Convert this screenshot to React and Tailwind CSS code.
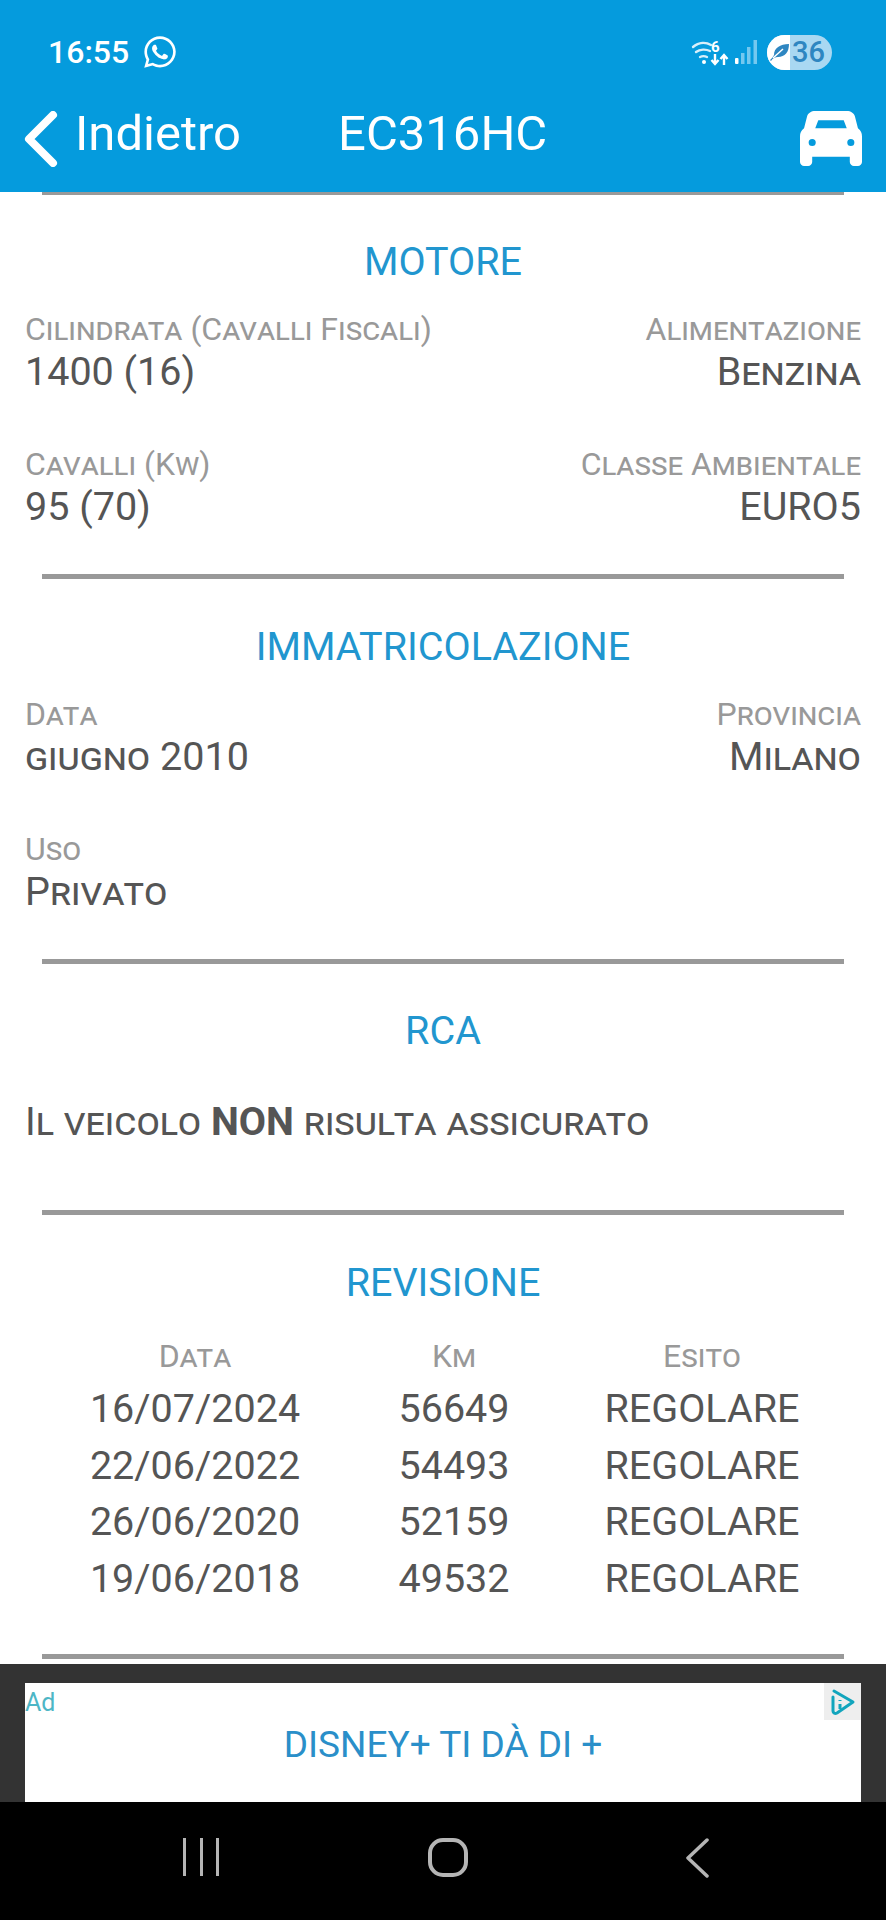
import React from 'react';
import { FaWhatsapp } from 'react-icons/fa';

const Divider = () => <div className="mx-[42px] h-[5px] bg-[#999999]" />;

const Heading = ({ children }) => (
  <h2 className="text-center text-[39.5px] leading-[42px] text-[#2196cf]">{children}</h2>
);

const Field = ({ label, value, right }) => (
  <div className={right ? 'text-right' : ''}>
    <div className="text-[32px] leading-[36px] text-[#999999] [font-variant:small-caps]">{label}</div>
    <div className="mt-[3px] text-[39.5px] leading-[44px] text-[#555555] [font-variant:small-caps]">{value}</div>
  </div>
);

const revisions = [
  ['16/07/2024', '56649'],
  ['22/06/2022', '54493'],
  ['26/06/2020', '52159'],
  ['19/06/2018', '49532'],
];

const StatusIcons = () => (
  <div className="flex items-center">
    {/* wifi + data arrows */}
    <svg width="36" height="28" viewBox="0 0 36 28" fill="none" className="overflow-visible">
      <g stroke="#d8effa" strokeWidth="2.4" strokeLinecap="round">
        <path d="M1 9c6-5 13-5 18-2" />
        <path d="M4 14c4-3 10-3 14-1" />
        <path d="M8 19c2-1 5-1 7 0" />
      </g>
      <circle cx="12" cy="24" r="2" fill="#ffffff" />
      <text x="19" y="14" fontSize="15" fontWeight="700" fill="#ffffff" fontFamily="Roboto, sans-serif">6</text>
      <path d="M23 16v10M19.500 22l3.500 4 3.500-4" stroke="#fff" strokeWidth="2.4" />
      <path d="M32 27V17M28.500 21l3.500-4 3.500 4" stroke="#fff" strokeWidth="2.4" />
    </svg>
    <svg className="ml-[7px]" width="22" height="24" viewBox="0 0 22 24">
      <rect x="0" y="18" width="3.500" height="6" rx="1" fill="#ffffff" />
      <rect x="6" y="13" width="3.500" height="11" fill="#74c8ef" />
      <rect x="12" y="7" width="3.500" height="17" fill="#74c8ef" />
      <rect x="18.500" y="0" width="3.500" height="24" fill="#74c8ef" />
    </svg>
    {/* battery */}
    <div className="ml-[10px] flex h-[35px] w-[65px] overflow-hidden rounded-full bg-[#a9d8f2]">
      <div className="flex w-[23px] items-center justify-end bg-white">
        <svg width="20" height="18" viewBox="0 0 20 18">
          <path d="M0 17C2 15 3 14 4 12C4 5 10 1 19 1C19 9 15 14 8 14C5 14 3 15 1 18Z" fill="#2e86c1" />
          <path d="M3 15L13 6" stroke="white" strokeWidth="1.500" />
        </svg>
      </div>
      <span className="pl-[2px] text-[29px] font-medium leading-[35px] text-[#2e86c1]">36</span>
    </div>
  </div>
);

const App = () => {
  return (
    <div className="flex h-[1920px] w-[886px] flex-col overflow-hidden bg-white font-['Roboto',sans-serif]">
      {/* Header */}
      <header className="h-[192px] shrink-0 bg-[#059bdd] text-white">
        <div className="flex items-center justify-between pl-[48px] pr-[54px] pt-[34px]">
          <div className="flex items-center gap-[13px]">
            <span className="text-[32px] font-medium leading-[34px]">16:55</span>
            <FaWhatsapp className="h-[36px] w-[36px]" />
          </div>
          <StatusIcons />
        </div>
        <div className="mt-[36px] flex items-center pl-[24px] pr-[24px]">
          <svg width="34" height="56" viewBox="0 0 34 56" fill="none">
            <path d="M29 4L5 28L29 52" stroke="white" strokeWidth="8" strokeLinecap="round" strokeLinejoin="round" />
          </svg>
          <span className="ml-[17px] pb-[9px] text-[49px] leading-[56px]">Indietro</span>
          <span className="ml-[97px] pb-[9px] text-[49px] leading-[56px]">EC316HC</span>
          {/* car */}
          <svg className="ml-auto" width="62" height="55" viewBox="0 0 61 54" fill="white" fillRule="evenodd">
            <path d="M15 0H46C50 0 53 2 54 5L57 17C60 19 61 22 61 25V50C61 52 59 54 57 54H53C51 54 49 52 49 50V45H12V50C12 52 10 54 8 54H4C2 54 0 52 0 50V25C0 22 1 19 4 17L7 5C8 2 11 0 15 0ZM18 9H43L46 17H15ZM8.500 31a3.500 3.500 0 1 0 7 0a3.500 3.500 0 1 0-7 0ZM46.500 31a3.500 3.500 0 1 0 7 0a3.500 3.500 0 1 0-7 0Z" />
          </svg>
        </div>
      </header>

      {/* Content */}
      <main className="flex-1 overflow-hidden">
        <div className="mx-[42px] h-[3px] bg-[#999999]" />

        <section className="px-[25px] pt-[46px]">
          <Heading>MOTORE</Heading>
          <div className="mt-[28px] flex justify-between">
            <Field label="Cilindrata (Cavalli Fiscali)" value="1400 (16)" />
            <Field right label="Alimentazione" value="Benzina" />
          </div>
          <div className="mt-[52px] flex justify-between pb-[45px]">
            <Field label="Cavalli (Kw)" value="95 (70)" />
            <Field right label="Classe Ambientale" value="EURO5" />
          </div>
        </section>
        <Divider />

        <section className="px-[25px] pt-[47px]">
          <Heading>IMMATRICOLAZIONE</Heading>
          <div className="mt-[28px] flex justify-between">
            <Field label="Data" value="giugno 2010" />
            <Field right label="Provincia" value="Milano" />
          </div>
          <div className="mt-[52px] pb-[45px]">
            <Field label="Uso" value="Privato" />
          </div>
        </section>
        <Divider />

        <section className="px-[25px] pt-[46px]">
          <Heading>RCA</Heading>
          <p className="mt-[48px] text-[39.5px] leading-[44px] text-[#555555] [font-variant:small-caps]">
            Il veicolo <b className="font-bold">NON</b> risulta assicurato
          </p>
          <div className="h-[66px]" />
        </section>
        <Divider />

        <section className="pt-[47px]">
          <Heading>REVISIONE</Heading>
          <div className="mx-[42px] mt-[34px] grid grid-cols-[306px_212px_284px] text-center">
            <div className="h-[43px] text-[32px] leading-[36px] text-[#999999] [font-variant:small-caps]">Data</div>
            <div className="h-[43px] text-[32px] leading-[36px] text-[#999999] [font-variant:small-caps]">Km</div>
            <div className="h-[43px] text-[32px] leading-[36px] text-[#999999] [font-variant:small-caps]">Esito</div>
            {revisions.map(([date, km]) => (
              <React.Fragment key={date}>
                <div className="text-[39.5px] leading-[56.5px] text-[#555555]">{date}</div>
                <div className="text-[39.5px] leading-[56.5px] text-[#555555]">{km}</div>
                <div className="text-[39.5px] leading-[56.5px] text-[#555555]">REGOLARE</div>
              </React.Fragment>
            ))}
          </div>
          <div className="h-[47px]" />
        </section>
        <Divider />
      </main>

      {/* Ad banner */}
      <div className="h-[138px] shrink-0 bg-[#333333] px-[25px] pt-[19px]">
        <div className="relative h-[119px] bg-white">
          <span className="absolute left-0 top-[5px] text-[25px] leading-[30px] text-[#4db6c6]">Ad</span>
          <div className="absolute right-0 top-0 flex h-[37px] w-[37px] items-center justify-center bg-[#eeeeee]">
            <svg width="28" height="30" viewBox="0 0 28 30" fill="none">
              <path d="M5 4L24 15L8 26C6 27 4 26 4 24V10" stroke="#12a5bd" strokeWidth="3" strokeLinecap="round" strokeLinejoin="round" />
              <path d="M11 13v1M11 17v5" stroke="#12a5bd" strokeWidth="3" />
            </svg>
          </div>
          <div className="pt-[40px] text-center text-[37px] leading-[44px] text-[#2a8fc9]">DISNEY+ TI DÀ DI +</div>
        </div>
      </div>

      {/* Android nav bar */}
      <nav className="relative flex h-[118px] shrink-0 items-start bg-black pt-[36px]">
        <div className="ml-[183px] flex h-[38px] w-[36px] justify-between">
          <div className="w-[3px] bg-[#b5b5b5]" />
          <div className="w-[3px] bg-[#b5b5b5]" />
          <div className="w-[3px] bg-[#b5b5b5]" />
        </div>
        <div className="ml-[209px] h-[39px] w-[40px] rounded-[15px] border-[4px] border-[#b5b5b5]" />
        <svg className="ml-[217px]" width="24" height="40" viewBox="0 0 24 40" fill="none">
          <path d="M22 2L3 20L22 38" stroke="#b5b5b5" strokeWidth="3.5" strokeLinecap="round" strokeLinejoin="round" />
        </svg>
      </nav>
    </div>
  );
};

export default App;
